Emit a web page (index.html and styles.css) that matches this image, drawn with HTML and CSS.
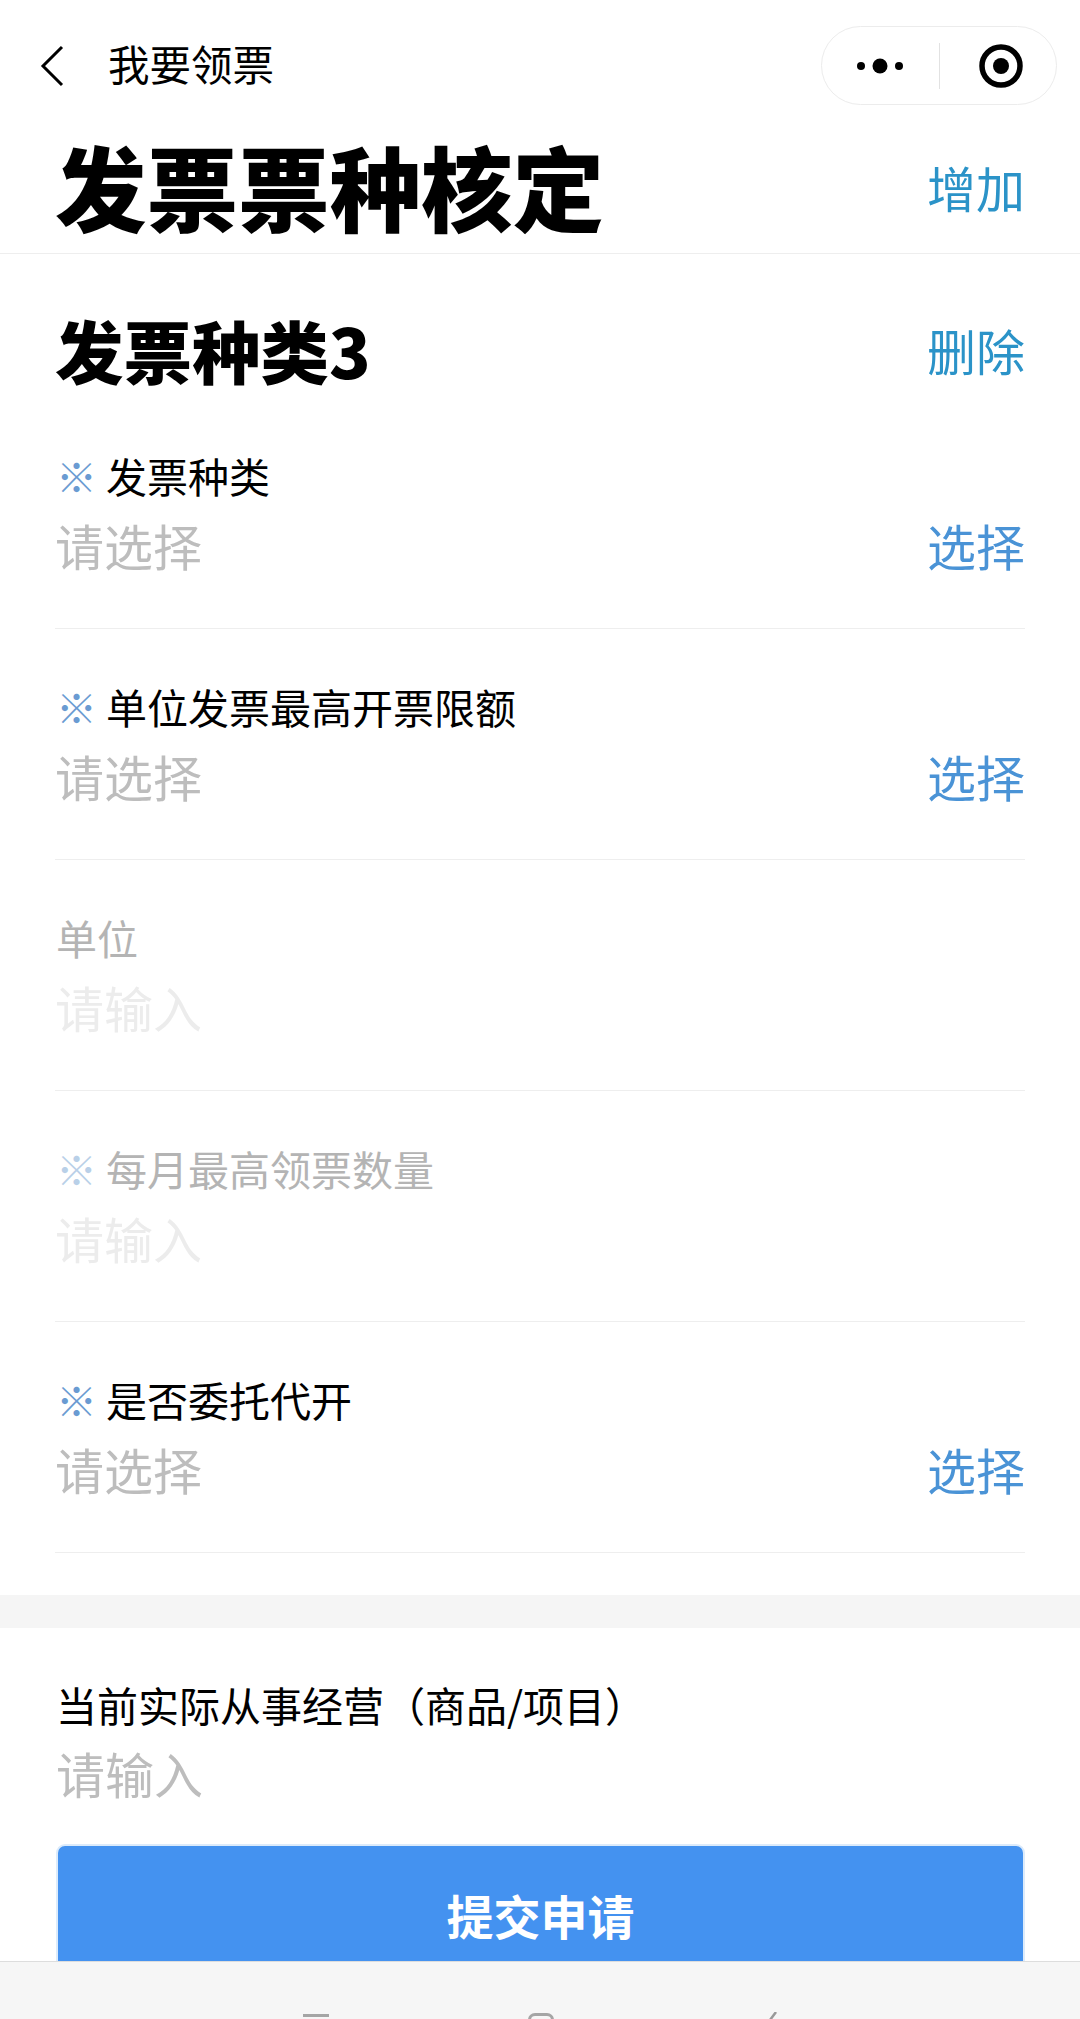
FILE: index.html
```html
<!DOCTYPE html>
<html lang="zh-CN">
<head>
    <meta charset="UTF-8">
    <meta name="viewport" content="width=device-width, initial-scale=1.0">
    <title>我要领票</title>
    <link rel="stylesheet" href="styles.css">
</head>
<body>
    <div class="page">
        <div class="content">
            <header class="navbar">
                <div class="nav-left">
                    <svg class="back-icon" width="26" height="42" viewBox="0 0 26 42">
                        <path d="M23 2 L4 21 L23 40" fill="none" stroke="#000" stroke-width="3"/>
                    </svg>
                    <span class="nav-title">我要领票</span>
                </div>
                <div class="capsule">
                    <svg class="capsule-more" width="50" height="16" viewBox="0 0 50 16">
                        <circle cx="6" cy="8" r="4" fill="#000"/>
                        <circle cx="25" cy="8" r="7.5" fill="#000"/>
                        <circle cx="44" cy="8" r="4" fill="#000"/>
                    </svg>
                    <span class="capsule-line"></span>
                    <svg class="capsule-target" width="44" height="44" viewBox="0 0 44 44">
                        <circle cx="22" cy="22" r="19" fill="none" stroke="#000" stroke-width="5.5"/>
                        <circle cx="22" cy="22" r="8" fill="#000"/>
                    </svg>
                </div>
            </header>

            <div class="title-row">
                <h1>发票票种核定</h1>
                <span class="link-teal">增加</span>
            </div>

            <section class="card">
                <div class="section-head">
                    <h2>发票种类3</h2>
                    <span class="link-teal">删除</span>
                </div>

                <div class="field">
                    <div class="field-label"><span class="mark">※</span>发票种类</div>
                    <div class="field-value">
                        <span class="placeholder">请选择</span>
                        <span class="link-blue">选择</span>
                    </div>
                </div>
                <div class="field">
                    <div class="field-label"><span class="mark">※</span>单位发票最高开票限额</div>
                    <div class="field-value">
                        <span class="placeholder">请选择</span>
                        <span class="link-blue">选择</span>
                    </div>
                </div>
                <div class="field disabled">
                    <div class="field-label">单位</div>
                    <div class="field-value">
                        <span class="placeholder">请输入</span>
                    </div>
                </div>
                <div class="field disabled">
                    <div class="field-label"><span class="mark">※</span>每月最高领票数量</div>
                    <div class="field-value">
                        <span class="placeholder">请输入</span>
                    </div>
                </div>
                <div class="field">
                    <div class="field-label"><span class="mark">※</span>是否委托代开</div>
                    <div class="field-value">
                        <span class="placeholder">请选择</span>
                        <span class="link-blue">选择</span>
                    </div>
                </div>
            </section>

            <section class="card-bottom">
                <div class="field-label">当前实际从事经营（商品/项目）</div>
                <div class="field-value short">
                    <span class="placeholder">请输入</span>
                </div>
                <button type="button" class="submit-btn">提交申请</button>
            </section>
        </div>

        <footer class="system-bar">
            <span class="sys-menu"></span>
            <span class="sys-home"></span>
            <svg class="sys-back" width="10" height="8" viewBox="0 0 10 8">
                <path d="M8 0 L2 8" fill="none" stroke="#999" stroke-width="2.5"/>
            </svg>
        </footer>
    </div>
</body>
</html>
```

FILE: styles.css
```css
* {
    box-sizing: border-box;
}
html, body {
    margin: 0;
    padding: 0;
}
body {
    font-family: "Noto Sans CJK SC", "Noto Sans", sans-serif;
    color: #000;
    background-color: #fff;
}
.page {
    height: 2019px;
    display: flex;
    flex-direction: column;
    overflow: hidden;
}
.content {
    flex: 1;
    min-height: 0;
    overflow: hidden;
    background-color: #f5f5f5;
}

/* top nav */
.navbar {
    height: 130px;
    padding: 26px 23px 0 39px;
    display: flex;
    justify-content: space-between;
    align-items: flex-start;
    background-color: #fff;
}
.nav-left {
    display: flex;
    align-items: center;
    height: 80px;
}
.back-icon {
    margin-right: 43px;
}
.nav-title {
    font-size: 41.5px;
    line-height: 60px;
    padding-bottom: 6px;
}
.capsule {
    width: 236px;
    height: 79px;
    border: 1px solid #ececec;
    border-radius: 40px;
    display: flex;
    align-items: center;
    background-color: #fff;
}
.capsule-more {
    margin-left: 33px;
}
.capsule-line {
    width: 1px;
    height: 46px;
    margin-left: 34px;
    background-color: #e2e2e2;
}
.capsule-target {
    margin-left: 39px;
}

/* page title */
.title-row {
    height: 124px;
    padding: 0 55px 14px 55px;
    display: flex;
    justify-content: space-between;
    align-items: center;
    background-color: #fff;
    border-bottom: 1px solid #eee;
}
h1 {
    margin: 0;
    font-size: 91.5px;
    line-height: 120px;
    font-weight: 900;
}
.link-teal {
    font-size: 49px;
    line-height: 64px;
    color: #2b93c8;
}
.title-row .link-teal {
    margin-top: 4px;
}
.link-blue {
    font-size: 49px;
    line-height: 82px;
    color: #4a93d6;
}

.card {
    padding: 51px 55px 42px;
    background-color: #fff;
}
.section-head {
    display: flex;
    justify-content: space-between;
    align-items: center;
    height: 90px;
    margin-bottom: 3px;
}
h2 {
    margin: 0;
    font-size: 68.5px;
    line-height: 80px;
    font-weight: 900;
}

/* form rows */
.field {
    height: 231px;
    padding-top: 47px;
    border-bottom: 1px solid #eee;
}
.field-label {
    font-size: 41px;
    line-height: 60px;
    padding-left: 1px;
    display: flex;
}
.mark {
    width: 50px;
    color: #6a9bd2;
}
.field-value {
    display: flex;
    justify-content: space-between;
    height: 82px;
    margin-top: -1px;
}
.placeholder {
    font-size: 49px;
    line-height: 82px;
    color: #bdbdbd;
}
.disabled .field-label {
    color: #b4b4b4;
}
.disabled .mark {
    color: #b9d0e8;
}
.disabled .placeholder {
    color: #ececec;
}

.card-bottom {
    margin-top: 33px;
    padding: 46px 56px 0;
    background-color: #fff;
    height: 400px;
}
.card-bottom .field-label {
    padding-left: 0;
}
.field-value.short {
    height: 80px;
}
.field-value.short .placeholder {
    line-height: 80px;
}
.submit-btn {
    display: block;
    width: 969px;
    height: 140px;
    margin-top: 31px;
    padding: 0;
    border: 2px solid #dcebfb;
    border-radius: 9px;
    background-color: #4492f0;
    color: #fff;
    font-family: inherit;
    font-size: 47px;
    font-weight: 700;
}

/* android bar */
.system-bar {
    height: 58px;
    flex-shrink: 0;
    border-top: 1px solid #ddd;
    background-color: #f6f6f6;
    position: relative;
    overflow: hidden;
}
.sys-menu {
    position: absolute;
    left: 303px;
    top: 52px;
    width: 26px;
    height: 3px;
    background-color: #a5a5a5;
}
.sys-home {
    position: absolute;
    left: 528px;
    top: 51px;
    width: 26px;
    height: 26px;
    border: 3px solid #a5a5a5;
    border-radius: 7px;
}
.sys-back {
    position: absolute;
    left: 768px;
    top: 50px;
}
```
